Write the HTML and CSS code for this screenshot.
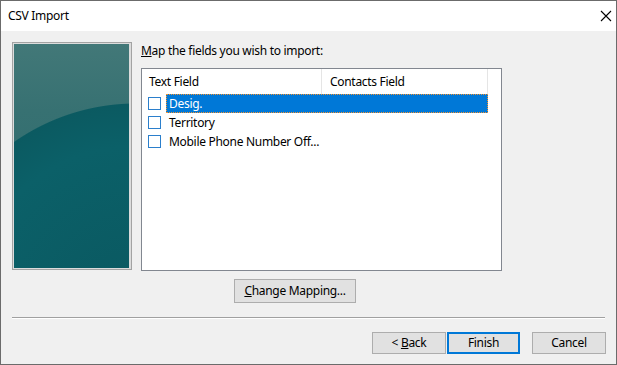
FILE: index.html
```html
<!DOCTYPE html>
<html>
<head>
<meta charset="utf-8">
<link rel="stylesheet" href="styles.css">
</head>
<body>
<div class="window">
  <div class="titlebar">
    <span class="title">CSV Import</span>
    <svg class="close" width="12" height="12" viewBox="0 0 12 12"><path d="M1 1 L11 11 M11 1 L1 11" stroke="#000" stroke-width="1.1" fill="none"/></svg>
  </div>
  <div class="client">
    <div class="main">
      <div class="banner"><div class="banner-art"></div></div>
      <div class="right">
        <div class="label"><u>M</u>ap the fields you wish to import:</div>
        <div class="listbox">
          <div class="header">
            <div class="col col1">Text Field</div>
            <div class="col col2">Contacts Field</div>
          </div>
          <div class="row">
            <span class="check"></span>
            <span class="cell selected">Desig.</span>
          </div>
          <div class="row">
            <span class="check"></span>
            <span class="cell">Territory</span>
          </div>
          <div class="row">
            <span class="check"></span>
            <span class="cell">Mobile Phone Number Off...</span>
          </div>
        </div>
      </div>
    </div>
    <div class="mapping-row">
      <button class="btn mapping"><u>C</u>hange Mapping...</button>
    </div>
    <div class="separator"></div>
    <div class="buttons">
      <button class="btn back">&lt; <u>B</u>ack</button>
      <button class="btn finish">Finish</button>
      <button class="btn cancel">Cancel</button>
    </div>
  </div>
</div>
</body>
</html>
```

FILE: styles.css
```css
* { box-sizing: border-box; }
html, body { margin: 0; padding: 0; }
body {
  font-family: "Noto Sans", "Segoe UI", sans-serif;
  font-size: 12px;
  letter-spacing: -0.3px;
  color: #000;
  background: #f0f0f0;
}
.window {
  width: 617px;
  height: 365px;
  border: 1px solid #6b6b6b;
  display: flex;
  flex-direction: column;
  background: #f0f0f0;
}
.titlebar {
  height: 30px;
  background: #fff;
  display: flex;
  align-items: center;
  justify-content: space-between;
  padding: 0 4px 0 7px;
  flex: none;
}
.title { font-size: 12px; line-height: 16px; margin-top: -1px; }
.close { margin-top: -1px; }
.client { flex: 1; display: flex; flex-direction: column; }
.main {
  display: flex;
  padding: 11px 0 0 11px;
}
.banner {
  width: 120px;
  height: 228px;
  border: 1px solid #a3a3a3;
  background: #dcdcdc;
  padding: 1px 2px 1px 1px;
  flex: none;
}
.banner-art {
  width: 100%;
  height: 100%;
  background:
    radial-gradient(circle 214px at 122px 272px, #0a5860 0, #0b6068 170px, #0b5a61 212px, transparent 213px),
    linear-gradient(180deg, #427878 0%, #377172 30%, #2c6a6c 100%);
}
.right { margin-left: 9px; }
.label { line-height: 16px; height: 16px; margin-top: 1px; }
.listbox {
  margin-top: 9px;
  width: 361px;
  height: 203px;
  border: 1px solid #828790;
  background: #fff;
}
.header {
  display: flex;
  height: 25px;
}
.col {
  display: flex;
  align-items: center;
  padding-left: 7px;
  border-right: 1px solid #e5e5e5;
  height: 25px;
  padding-bottom: 1px;
}
.col1 { width: 180px; }
.col2 { width: 166px; padding-left: 8px; }
.row {
  height: 19px;
  display: flex;
  align-items: center;
  padding-left: 6px;
}
.check {
  width: 13px;
  height: 13px;
  border: 1px solid #2b7fcc;
  background: #fff;
  flex: none;
}
.cell {
  margin-left: 5px;
  height: 19px;
  line-height: 17px;
  padding-left: 2px;
  border: 1px solid transparent;
}
.cell.selected {
  width: 322px;
  background: #0078d7;
  color: #fff;
  border: 1px dotted #f5922e;
}
.mapping-row { padding-left: 233px; margin-top: 8px; }
.btn {
  font-family: inherit;
  font-size: 12px;
  letter-spacing: -0.3px;
  color: #000;
  background: #e1e1e1;
  border: 1px solid #adadad;
  padding: 0;
  margin: 0;
  height: 22px;
  line-height: 18px;
}
.mapping { width: 122px; height: 24px; }
.separator {
  margin: 14px 11px 0 11px;
  height: 2px;
  border-top: 1px solid #a0a0a0;
  border-bottom: 1px solid #fff;
}
.buttons {
  display: flex;
  margin-top: 13px;
  padding-left: 371px;
}
.back { width: 74px; }
.finish { width: 73px; margin-left: 1px; border: 2px solid #0078d7; }
.cancel { width: 74px; margin-left: 12px; }
```
